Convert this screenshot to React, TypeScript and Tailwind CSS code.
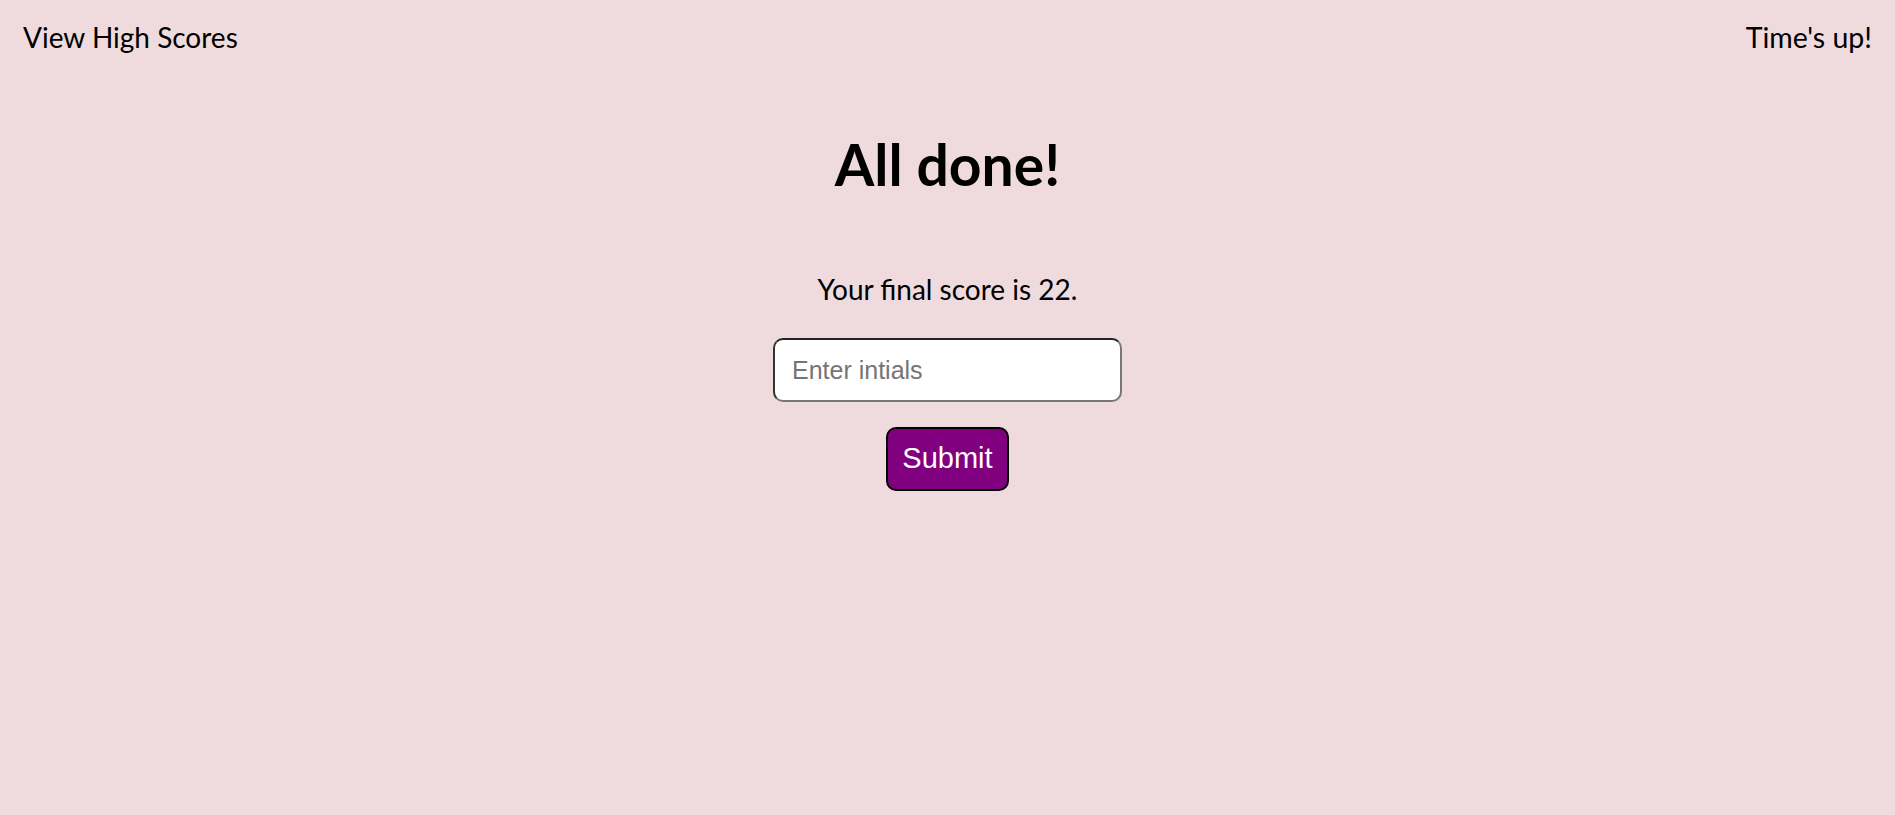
const App = () => {
  return (
    <div className="min-h-screen w-full bg-[#efdbdd] text-black font-['Lato',sans-serif]">
      <header className="flex justify-between items-center px-[23px] pt-[18px]">
        <a className="text-[28px] leading-[38px] cursor-pointer">View High Scores</a>
        <p className="text-[28.5px] leading-[38px]">Time's up!</p>
      </header>
      <main className="flex flex-col items-center">
        <h1 className="mt-[68px] text-[57px] leading-[80px] font-bold">All done!</h1>
        <p className="mt-[66px] text-[28px] leading-[38px]">Your final score is 22.</p>
        <input
          type="text"
          placeholder="Enter intials"
          className="mt-[30px] w-[349px] h-[64px] rounded-[10px] border-2 border-t-[#222] border-l-[#333] border-r-[#777] border-b-[#777] bg-white px-[17px] text-[25px] font-['Liberation_Sans',sans-serif] placeholder:text-[#757575] outline-none"
        />
        <button className="mt-[25px] w-[123px] h-[64px] rounded-[10px] border-2 border-black bg-[#800080] text-white text-[29px] font-['Liberation_Sans',sans-serif]">
          Submit
        </button>
      </main>
    </div>
  );
};

export default App;
